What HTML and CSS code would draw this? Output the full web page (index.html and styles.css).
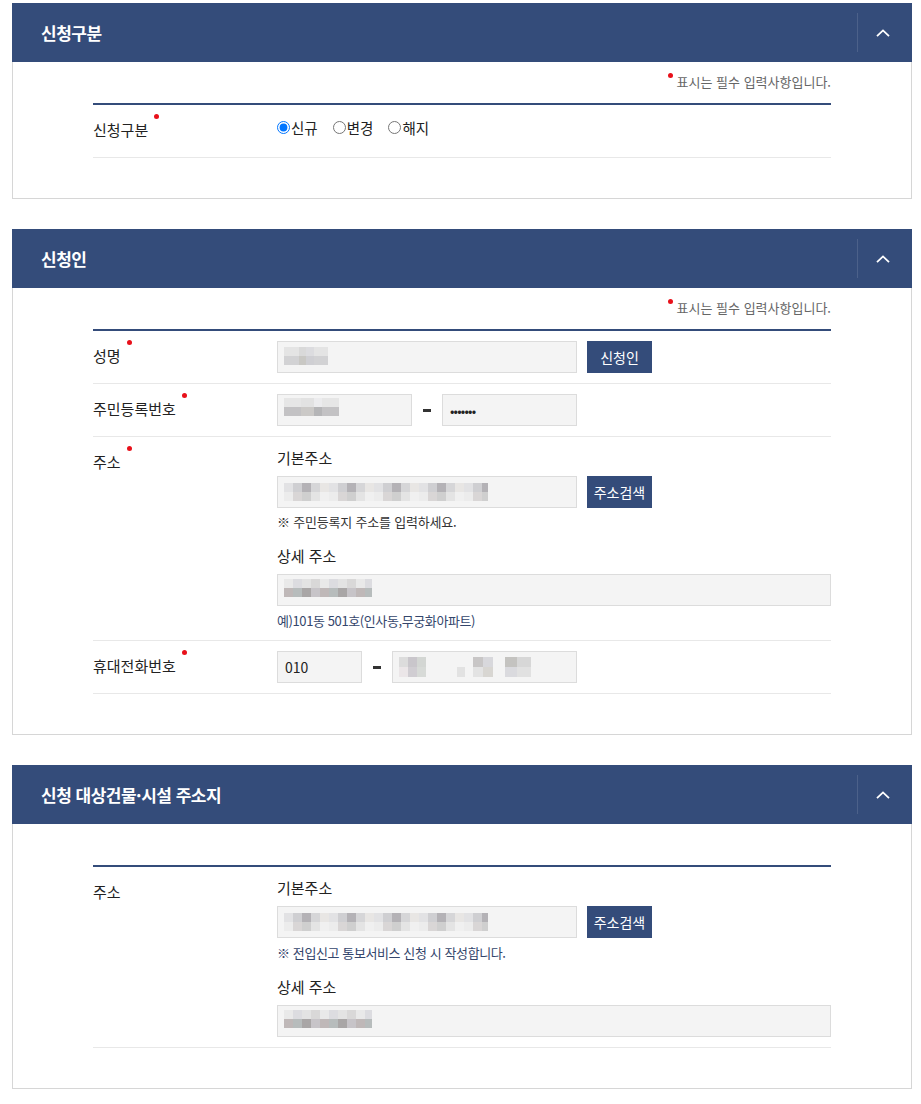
FILE: index.html
```html
<!DOCTYPE html>
<html lang="ko">
<head>
  <meta charset="UTF-8">
  <meta name="viewport" content="width=device-width, initial-scale=1.0">
  <title>신청서 작성</title>
  <link rel="stylesheet" href="styles.css">
</head>

<body>
  <div class="wrap">

    <section class="panel">
      <div class="panel-head">
        <h2>신청구분</h2>
        <button class="toggle" type="button" aria-label="접기">
          <svg width="14" height="8" viewBox="0 0 14 8"><polyline points="1,7.2 7,1.4 13,7.2" fill="none" stroke="#fff" stroke-width="1.8"/></svg>
        </button>
      </div>
      <div class="panel-body">
        <p class="req-note"><span class="req"></span>표시는 필수 입력사항입니다.</p>
        <div class="form-table">
          <div class="row">
            <div class="th"><span class="t req-after">신청구분</span></div>
            <div class="td">
              <div class="radios">
                <label><input type="radio" name="kind" checked>신규</label>
                <label><input type="radio" name="kind">변경</label>
                <label><input type="radio" name="kind">해지</label>
              </div>
            </div>
          </div>
        </div>
      </div>
    </section>

    <section class="panel">
      <div class="panel-head">
        <h2>신청인</h2>
        <button class="toggle" type="button" aria-label="접기">
          <svg width="14" height="8" viewBox="0 0 14 8"><polyline points="1,7.2 7,1.4 13,7.2" fill="none" stroke="#fff" stroke-width="1.8"/></svg>
        </button>
      </div>
      <div class="panel-body">
        <p class="req-note"><span class="req"></span>표시는 필수 입력사항입니다.</p>
        <div class="form-table">
          <div class="row">
            <div class="th"><span class="t req-after">성명</span></div>
            <div class="td">
              <div class="inline">
                <input class="field w300 mask-name" type="text" readonly>
                <button class="btn" type="button">신청인</button>
              </div>
            </div>
          </div>
          <div class="row">
            <div class="th"><span class="t req-after">주민등록번호</span></div>
            <div class="td">
              <div class="inline">
                <input class="field w135 mask-rrn" type="text" readonly>
                <span class="dash"></span>
                <input class="field w135 pw" type="password" value="1234567" readonly>
              </div>
            </div>
          </div>
          <div class="row">
            <div class="th"><span class="t req-after">주소</span></div>
            <div class="td">
              <div class="sub-label">기본주소</div>
              <div class="inline">
                <input class="field w300 mask-addr" type="text" readonly>
                <button class="btn" type="button">주소검색</button>
              </div>
              <p class="help">※ 주민등록지 주소를 입력하세요.</p>
              <div class="sub-label gap">상세 주소</div>
              <input class="field full mask-detail" type="text" readonly>
              <p class="help ex">예)101동 501호(인사동,무궁화아파트)</p>
            </div>
          </div>
          <div class="row">
            <div class="th"><span class="t req-after">휴대전화번호</span></div>
            <div class="td">
              <div class="inline">
                <input class="field w85" type="text" value="010">
                <span class="dash"></span>
                <input class="field w185 mask-phone" type="text" readonly>
              </div>
            </div>
          </div>
        </div>
      </div>
    </section>

    <section class="panel">
      <div class="panel-head">
        <h2>신청 대상건물·시설 주소지</h2>
        <button class="toggle" type="button" aria-label="접기">
          <svg width="14" height="8" viewBox="0 0 14 8"><polyline points="1,7.2 7,1.4 13,7.2" fill="none" stroke="#fff" stroke-width="1.8"/></svg>
        </button>
      </div>
      <div class="panel-body">
        <p class="req-note"></p>
        <div class="form-table">
          <div class="row">
            <div class="th"><span class="t">주소</span></div>
            <div class="td">
              <div class="sub-label">기본주소</div>
              <div class="inline">
                <input class="field w300 mask-addr" type="text" readonly>
                <button class="btn" type="button">주소검색</button>
              </div>
              <p class="help ex">※ 전입신고 통보서비스 신청 시 작성합니다.</p>
              <div class="sub-label gap">상세 주소</div>
              <input class="field full mask-detail" type="text" readonly>
            </div>
          </div>
        </div>
      </div>
    </section>

  </div>
</body>
</html>
```

FILE: styles.css
```css
* {
  box-sizing: border-box;
}

body {
  margin: 0;
  font-family: "Noto Sans CJK KR", "Noto Sans", sans-serif;
  color: #222;
  background: #fff;
}

.wrap {
  width: 900px;
  margin: 3px 0 0 12px;
}

.panel {
  margin-bottom: 30px;
}

.panel-head {
  display: flex;
  align-items: stretch;
  height: 59px;
  background: #344c7a;
  color: #fff;
}

.panel-head h2 {
  flex: 1;
  margin: 0;
  padding-left: 29px;
  font-size: 17px;
  font-weight: bold;
  letter-spacing: -0.5px;
  line-height: 60px;
}

.toggle {
  width: 55px;
  margin: 10px 0;
  padding: 0 4px 0 0;
  background: none;
  border: none;
  border-left: 1px solid rgba(255, 255, 255, 0.12);
  cursor: pointer;
  display: flex;
  align-items: center;
  justify-content: center;
}

.panel-body {
  border: 1px solid #d6d6d6;
  border-top: none;
  padding: 11px 80px 40px;
}

.req-note {
  margin: 0 0 12px;
  height: 18px;
  font-size: 13px;
  line-height: 18px;
  color: #666;
  text-align: right;
}

.req {
  display: inline-block;
  width: 5px;
  height: 5px;
  margin-right: 4px;
  border-radius: 50%;
  background: #e8101a;
  vertical-align: top;
}

.form-table {
  border-top: 2px solid #344c7a;
}

.row {
  display: grid;
  grid-template-columns: 184px 1fr;
  border-bottom: 1px solid #e8e8e8;
}

.th {
  padding-top: 15px;
  font-size: 15px;
  line-height: 20px;
  color: #222;
}

.t {
  position: relative;
}

.req-after::after {
  content: "";
  position: absolute;
  right: -11px;
  top: -5px;
  width: 5px;
  height: 5px;
  border-radius: 50%;
  background: #e8101a;
}

.td {
  padding: 10px 0;
}

.radios {
  display: flex;
  align-items: center;
  height: 24px;
  margin-bottom: 8px;
  font-size: 14.5px;
}

.radios label {
  display: flex;
  align-items: center;
  margin-right: 15px;
}

.radios input {
  width: 13px;
  height: 13px;
  margin: 0 1px 0 0;
}

.inline {
  display: flex;
  align-items: center;
}

.field {
  height: 32px;
  padding: 0 7px;
  font-family: inherit;
  font-size: 14px;
  color: #222;
  background-color: #f4f4f4;
  border: 1px solid #dcdcdc;
  border-radius: 0;
  outline: none;
}

.w300 { width: 300px; }
.w135 { width: 135px; }
.w85 { width: 85px; }
.w185 { width: 185px; }
.full { display: block; width: 100%; }

.pw {
  font-size: 13px;
  letter-spacing: -0.8px;
}

.dash {
  display: flex;
  justify-content: center;
  width: 30px;
}

.dash::before {
  content: "";
  width: 8px;
  height: 3px;
  background: #333;
}

.btn {
  width: 65px;
  height: 32px;
  margin-left: 10px;
  padding: 0;
  font-family: inherit;
  font-size: 14px;
  color: #fff;
  background: #344c7a;
  border: none;
  cursor: pointer;
}

.sub-label {
  margin-bottom: 7px;
  font-size: 15px;
  line-height: 22px;
  color: #222;
}

.sub-label.gap {
  margin-top: 14px;
}

.help {
  margin: 5px 0 0;
  font-size: 13px;
  line-height: 18px;
  letter-spacing: -0.2px;
  color: #333;
}

.help.ex {
  margin-top: 6px;
  letter-spacing: -0.4px;
  color: #34466c;
}

/* 개인정보 마스킹 */
.mask-name,
.mask-rrn,
.mask-addr,
.mask-detail,
.mask-phone {
  background-repeat: no-repeat;
  background-position: 6px 5px, 6px 14px;
}

.mask-name {
  background-image:
    repeating-linear-gradient(90deg, #e4e4e4 0 15px, #d9d9d9 15px 22px, #dcdcdf 22px 30px),
    repeating-linear-gradient(90deg, #d2d2d4 0 15px, #c9c8c4 15px 22px, #cfcfd3 22px 30px);
  background-size: 44px 9px, 44px 9px;
  background-position: 6px 5px, 6px 14px;
}

.mask-rrn {
  background-image:
    repeating-linear-gradient(90deg, #e6e6e6 0 17px, #e2e2e2 17px 30px, #ececee 30px 38px),
    repeating-linear-gradient(90deg, #c3c2c4 0 17px, #cbc9c7 17px 30px, #b5b5b7 30px 38px);
  background-size: 55px 9px, 55px 9px;
  background-position: 6px 3px, 6px 12px;
}

.mask-addr {
  background-image:
    repeating-linear-gradient(90deg, #e2e2e4 0 9px, #cfcfd2 9px 18px, #b4b2b6 18px 27px, #d6d6d8 27px 36px, #e8e6e4 36px 45px),
    repeating-linear-gradient(90deg, #ececec 0 9px, #d9d6d6 9px 18px, #cfcfcf 18px 27px, #e4e4e4 27px 36px, #f0f0f0 36px 45px);
  background-size: 204px 9px, 204px 9px;
  background-position: 6px 6px, 6px 15px;
}

.mask-detail {
  background-image:
    repeating-linear-gradient(90deg, #e9e9e9 0 9px, #dcdce0 9px 18px, #e3e3e3 18px 27px, #d9d8d8 27px 36px),
    repeating-linear-gradient(90deg, #bfb8b8 0 9px, #b7bcbc 9px 18px, #a9a6a6 18px 27px, #c7c4c8 27px 36px);
  background-size: 88px 9px, 88px 9px;
  background-position: 6px 4px, 6px 13px;
}

.mask-phone {
  background-image:
    repeating-linear-gradient(90deg, #dcdcdc 0 9px, #c9c6cb 9px 18px, #d3d6d3 18px 27px, transparent 27px 74px, #c8c6c6 74px 84px, #d8d8dc 84px 94px, #f4f4f4 94px 106px, #c4c3c0 106px 118px, #d7d7d7 118px 132px),
    repeating-linear-gradient(90deg, #ebe6e8 0 9px, #d0cdd2 9px 18px, #d7dad7 18px 27px, transparent 27px 58px, #e2e2e2 58px 66px, transparent 66px 74px, #e3e3e3 74px 84px, #d8d6d2 84px 94px, #f4f4f4 94px 106px, #dadade 106px 118px, #e1e1e1 118px 132px);
  background-size: 132px 10px, 132px 10px;
  background-position: 6px 5px, 6px 15px;
}
```
